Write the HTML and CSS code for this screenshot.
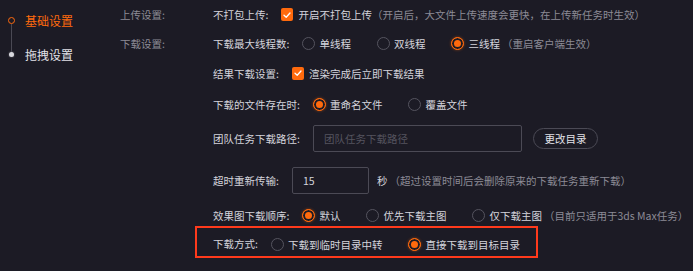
FILE: index.html
```html
<!DOCTYPE html>
<html lang="zh-CN">
<head>
  <meta charset="UTF-8" />
  <title>设置</title>
  <link rel="stylesheet" href="styles.css">
</head>
<body>

  <nav class="side-nav">
    <div class="nav-item active"><span class="nav-mark"></span>基础设置</div>
    <div class="nav-item"><span class="nav-mark"></span>拖拽设置</div>
  </nav>

  <main class="settings">
    <section class="group">
      <div class="group-title">上传设置:</div>
      <div class="group-body">
        <div class="row row-1">
          <span class="label">不打包上传:</span>
          <label class="check"><span class="box"><svg viewBox="0 0 12 12"><polyline points="3,6.2 5.2,8.3 9,4" /></svg></span>开启不打包上传</label>
          <span class="hint">（开启后，大文件上传速度会更快，在上传新任务时生效）</span>
        </div>
      </div>
    </section>

    <section class="group">
      <div class="group-title">下载设置:</div>
      <div class="group-body">
        <div class="row row-2">
          <span class="label">下载最大线程数:</span>
          <label class="radio"><span class="dot"></span>单线程</label>
          <label class="radio"><span class="dot"></span>双线程</label>
          <label class="radio on"><span class="dot"></span>三线程</label>
          <span class="hint tight">（重启客户端生效）</span>
        </div>

        <div class="row row-3">
          <span class="label">结果下载设置:</span>
          <label class="check"><span class="box"><svg viewBox="0 0 12 12"><polyline points="3,6.2 5.2,8.3 9,4" /></svg></span>渲染完成后立即下载结果</label>
        </div>

        <div class="row row-4">
          <span class="label">下载的文件存在时:</span>
          <label class="radio on"><span class="dot"></span>重命名文件</label>
          <label class="radio"><span class="dot"></span>覆盖文件</label>
        </div>

        <div class="row row-5">
          <span class="label">团队任务下载路径:</span>
          <input class="field path" type="text" placeholder="团队任务下载路径">
          <button class="btn" type="button">更改目录</button>
        </div>

        <div class="row row-6">
          <span class="label">超时重新传输:</span>
          <input class="field timeout" type="text" value="15">
          <span class="unit">秒</span>
          <span class="hint tight">（超过设置时间后会删除原来的下载任务重新下载）</span>
        </div>

        <div class="row row-7">
          <span class="label">效果图下载顺序:</span>
          <label class="radio on"><span class="dot"></span>默认</label>
          <label class="radio"><span class="dot"></span>优先下载主图</label>
          <label class="radio"><span class="dot"></span>仅下载主图</label>
          <span class="hint tight">（目前只适用于3ds Max任务）</span>
        </div>

        <div class="row row-8 marked">
          <span class="label">下载方式:</span>
          <label class="radio"><span class="dot"></span>下载到临时目录中转</label>
          <label class="radio on"><span class="dot"></span>直接下载到目标目录</label>
        </div>
      </div>
    </section>
  </main>

</body>
</html>
```

FILE: styles.css
```css
html, body {
  margin: 0;
  padding: 0;
  height: 100%;
  background-color: #1c1b25;
  font-family: "Noto Sans CJK SC", "Noto Sans", sans-serif;
  color: #d4d4dc;
}

body {
  display: flex;
  overflow: hidden;
}

/* left menu */
.side-nav {
  position: relative;
  width: 120px;
  flex: none;
  display: flex;
  flex-direction: column;
  gap: 14px;
  padding: 10px 0 0 8px;
  box-sizing: border-box;
}

.side-nav::before {
  content: "";
  position: absolute;
  left: 11px;
  top: 24px;
  width: 1px;
  height: 28px;
  background-color: #4a4954;
}

.nav-item {
  display: flex;
  align-items: center;
  height: 20px;
  font-size: 12px;
  color: #e2e2e8;
}

.nav-mark {
  width: 5px;
  height: 5px;
  margin: 0 11px 0 1px;
  border-radius: 50%;
  background-color: #d8d8de;
  box-shadow: 0 0 2px rgba(255,255,255,0.4);
}

.nav-item.active {
  color: #ff6a0d;
}

.nav-item.active .nav-mark {
  width: 5px;
  height: 5px;
  margin: 0 10px 0 0;
  background: none;
  border: 1.5px solid #ff6a0d;
  box-shadow: none;
}

/* settings */
.settings {
  flex: 1;
  font-size: 10.5px;
}

.group {
  display: flex;
}

.group-title {
  width: 93px;
  flex: none;
  height: 29px;
  line-height: 29px;
  color: #8c8b96;
}

.group-body {
  display: flex;
  flex-direction: column;
  align-items: flex-start;
}

.row {
  display: flex;
  align-items: center;
  height: 29px;
  white-space: nowrap;
}

.row-3 { height: 30px; }
.row-4 { height: 32px; }
.row-5 { height: 37px; }
.row-6 { height: 47px; }
.row-7 { height: 22px; }

.label {
  margin-right: 13px;
  color: #d4d4dc;
}

.hint {
  color: #8c8b96;
}

.hint.tight {
  margin-left: 2px;
}

.check {
  display: flex;
  align-items: center;
}

.box {
  width: 12px;
  height: 13px;
  margin-right: 5px;
  border-radius: 2px;
  background-color: #ff6a0d;
  display: flex;
  align-items: center;
  justify-content: center;
}

.box svg {
  width: 12px;
  height: 12px;
}

.box polyline {
  fill: none;
  stroke: #fff;
  stroke-width: 1.3;
  stroke-linecap: round;
  stroke-linejoin: round;
}

.radio {
  display: flex;
  align-items: center;
  margin-right: 26px;
}

.radio:last-of-type {
  margin-right: 0;
}

.dot {
  width: 11px;
  height: 11px;
  margin-right: 4px;
  border: 1px solid #55545f;
  border-radius: 50%;
}

.radio.on .dot {
  border-color: #ff6a0d;
  background-color: #ff6a0d;
  box-shadow: inset 0 0 0 2px #1c1b25, 0 0 3px rgba(255,106,13,0.45);
}

.field {
  height: 27px;
  padding: 0 10px;
  border: 1px solid #4b4a55;
  border-radius: 2px;
  background-color: #1c1b25;
  color: #d4d4dc;
  font-family: inherit;
  font-size: 10.5px;
  box-sizing: border-box;
  outline: none;
}

.field::placeholder {
  color: #55545f;
}

.path {
  width: 209px;
}

.timeout {
  width: 77px;
}

.btn {
  height: 21px;
  width: 65px;
  margin-left: 11px;
  padding: 0;
  border: 1px solid #4b4a55;
  border-radius: 11px;
  background-color: #1c1b25;
  color: #e2e2e8;
  font-family: inherit;
  font-size: 10.5px;
}

.unit {
  margin-left: 8px;
}

.marked {
  height: auto;
  margin-left: -18px;
  padding: 6px 16px 2px 16px;
  border: 2px solid #ff3a1c;
}

.marked .label {
  line-height: 20px;
}
```
